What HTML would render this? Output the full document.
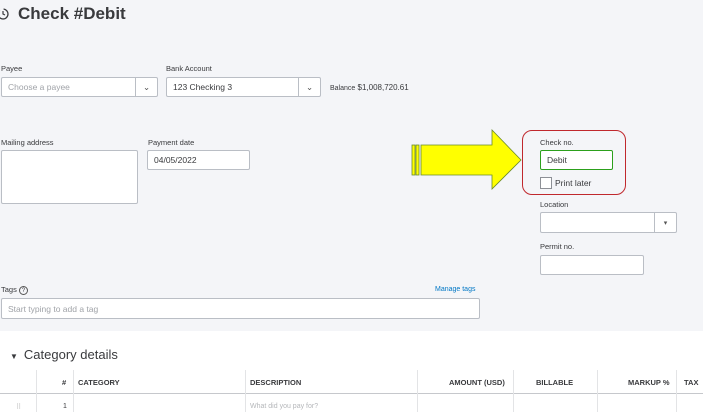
<!DOCTYPE html>
<html><head><style>
*{box-sizing:border-box;margin:0;padding:0}
body{width:703px;height:412px;overflow:hidden;font-family:"Liberation Sans",sans-serif;background:#fff;position:relative;color:#393a3d}
.top{position:absolute;left:0;top:0;width:703px;height:331px;background:#f4f5f8}
.a{position:absolute}
.lbl{font-size:7.5px;color:#393a3d}
.in{position:absolute;background:#fff;border:1px solid #babec5;border-radius:2px;font-size:8.5px;color:#393a3d;padding-left:6px;display:flex;align-items:center}
.ph{color:#a0a3a8}
.dd{position:absolute;top:0;bottom:0;width:22px;border-left:1px solid #babec5;display:flex;align-items:center;justify-content:center;color:#555}
.h{font-size:7.5px;font-weight:bold}
</style></head><body>
<div class="top"></div>
<svg class="a" style="left:-4px;top:6px" width="16" height="16" viewBox="0 0 16 16"><circle cx="7" cy="8" r="5" fill="none" stroke="#393a3d" stroke-width="1.3" stroke-dasharray="20 4"/><path d="M7 5v3l2 1" stroke="#393a3d" stroke-width="1.2" fill="none"/></svg>
<div class="a" style="left:18px;top:4px;font-size:17px;font-weight:bold;color:#393a3d">Check #Debit</div>

<div class="a lbl" style="left:1px;top:64px">Payee</div>
<div class="in ph" style="left:1px;top:77px;width:157px;height:20px">Choose a payee<div class="dd" style="right:0">⌄</div></div>
<div class="a lbl" style="left:166px;top:64px">Bank Account</div>
<div class="in" style="left:166px;top:77px;width:155px;height:20px">123 Checking 3<div class="dd" style="right:0">⌄</div></div>
<div class="a" style="left:330px;top:83px;font-size:8px"><span style="font-size:7px">Balance</span> $1,008,720.61</div>

<div class="a lbl" style="left:1px;top:138px">Mailing address</div>
<div class="in" style="left:1px;top:150px;width:137px;height:54px"></div>
<div class="a lbl" style="left:148px;top:138px">Payment date</div>
<div class="in" style="left:147px;top:150px;width:103px;height:20px">04/05/2022</div>

<svg class="a" style="left:410px;top:128px" width="120" height="62" viewBox="0 0 120 62"><rect x="2" y="17" width="3" height="30" fill="#ff0" stroke="#6a8a2a" stroke-width="0.8"/><rect x="6" y="17" width="3" height="30" fill="#ff0" stroke="#6a8a2a" stroke-width="0.8"/><path d="M11 17H82V2L111 32L82 61V47H11Z" fill="#ffff00" stroke="#6a8a2a" stroke-width="0.8"/></svg>

<div class="a" style="left:522px;top:130px;width:104px;height:65px;border:1px solid #c0282d;border-radius:10px"></div>
<div class="a lbl" style="left:540px;top:138px">Check no.</div>
<div class="in" style="left:540px;top:150px;width:73px;height:20px;border-color:#2ca01c">Debit</div>
<div class="a" style="left:540px;top:177px;width:12px;height:12px;border:1px solid #8d9096;background:#fff"></div>
<div class="a" style="left:555px;top:178px;font-size:8.5px">Print later</div>
<div class="a lbl" style="left:540px;top:200px">Location</div>
<div class="in" style="left:540px;top:212px;width:137px;height:21px"><div class="dd" style="right:0;font-size:7px">▾</div></div>
<div class="a lbl" style="left:540px;top:242px">Permit no.</div>
<div class="in" style="left:540px;top:255px;width:104px;height:20px"></div>

<div class="a lbl" style="left:1px;top:285px">Tags <span style="display:inline-block;width:9px;height:9px;border:1px solid #555;border-radius:50%;font-size:6px;text-align:center;line-height:8px">?</span></div>
<div class="a" style="left:435px;top:286px;font-size:7px;color:#0077c5">Manage tags</div>
<div class="in ph" style="left:1px;top:298px;width:479px;height:21px">Start typing to add a tag</div>

<div class="a" style="left:10px;top:347px;font-size:13px;color:#393a3d"><span style="font-size:8px;margin-right:6px">▼</span>Category details</div>

<div class="a" style="left:0;top:393px;width:703px;height:1px;background:#c6c8cc"></div>
<div class="a" style="left:36px;top:370px;width:1px;height:42px;background:#e3e4e6"></div>
<div class="a" style="left:73px;top:370px;width:1px;height:42px;background:#e3e4e6"></div>
<div class="a" style="left:245px;top:370px;width:1px;height:42px;background:#e3e4e6"></div>
<div class="a" style="left:417px;top:370px;width:1px;height:42px;background:#e3e4e6"></div>
<div class="a" style="left:513px;top:370px;width:1px;height:42px;background:#e3e4e6"></div>
<div class="a" style="left:597px;top:370px;width:1px;height:42px;background:#e3e4e6"></div>
<div class="a" style="left:676px;top:370px;width:1px;height:42px;background:#e3e4e6"></div>
<div class="a h" style="left:62px;top:378px">#</div>
<div class="a h" style="left:78px;top:378px">CATEGORY</div>
<div class="a h" style="left:250px;top:378px">DESCRIPTION</div>
<div class="a h" style="left:449px;top:378px">AMOUNT (USD)</div>
<div class="a h" style="left:536px;top:378px">BILLABLE</div>
<div class="a h" style="left:628px;top:378px">MARKUP %</div>
<div class="a h" style="left:684px;top:378px">TAX</div>
<div class="a" style="left:16px;top:403px;font-size:7px;color:#bbb">⠿</div>
<div class="a" style="left:63px;top:403px;font-size:7px">1</div>
<div class="a" style="left:250px;top:403px;font-size:7px;color:#b5b7ba">What did you pay for?</div>
</body></html>
